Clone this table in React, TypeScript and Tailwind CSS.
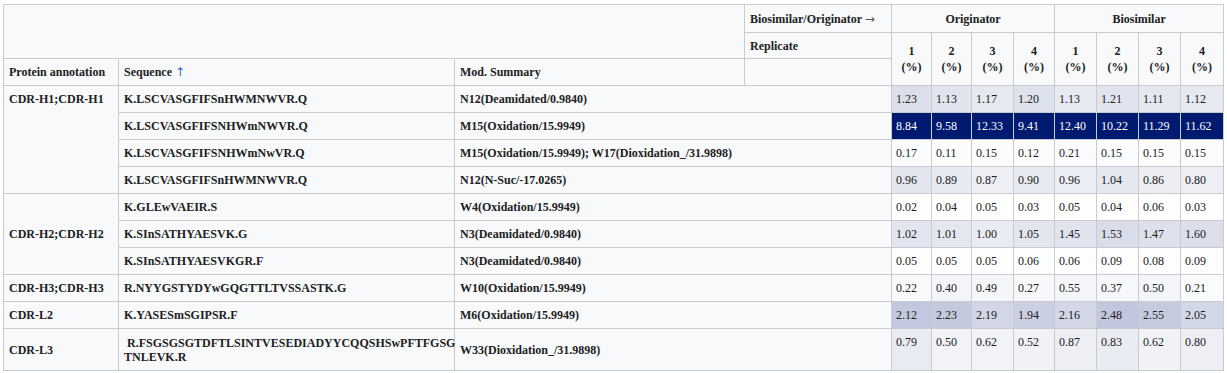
import React from "react";

type Row = {
  prot?: string;
  span?: number;
  top?: boolean;
  seq: React.ReactNode;
  mod: string;
  vals: number[];
  tall?: boolean;
};

const rows: Row[] = [
  { prot: "CDR-H1;CDR-H1", span: 4, top: true, seq: "K.LSCVASGFIFSnHWMNWVR.Q", mod: "N12(Deamidated/0.9840)", vals: [1.23, 1.13, 1.17, 1.2, 1.13, 1.21, 1.11, 1.12] },
  { seq: "K.LSCVASGFIFSNHWmNWVR.Q", mod: "M15(Oxidation/15.9949)", vals: [8.84, 9.58, 12.33, 9.41, 12.4, 10.22, 11.29, 11.62] },
  { seq: "K.LSCVASGFIFSNHWmNwVR.Q", mod: "M15(Oxidation/15.9949); W17(Dioxidation_/31.9898)", vals: [0.17, 0.11, 0.15, 0.12, 0.21, 0.15, 0.15, 0.15] },
  { seq: "K.LSCVASGFIFSnHWMNWVR.Q", mod: "N12(N-Suc/-17.0265)", vals: [0.96, 0.89, 0.87, 0.9, 0.96, 1.04, 0.86, 0.8] },
  { prot: "CDR-H2;CDR-H2", span: 3, seq: "K.GLEwVAEIR.S", mod: "W4(Oxidation/15.9949)", vals: [0.02, 0.04, 0.05, 0.03, 0.05, 0.04, 0.06, 0.03] },
  { seq: "K.SInSATHYAESVK.G", mod: "N3(Deamidated/0.9840)", vals: [1.02, 1.01, 1.0, 1.05, 1.45, 1.53, 1.47, 1.6] },
  { seq: "K.SInSATHYAESVKGR.F", mod: "N3(Deamidated/0.9840)", vals: [0.05, 0.05, 0.05, 0.06, 0.06, 0.09, 0.08, 0.09] },
  { prot: "CDR-H3;CDR-H3", span: 1, seq: "R.NYYGSTYDYwGQGTTLTVSSASTK.G", mod: "W10(Oxidation/15.9949)", vals: [0.22, 0.4, 0.49, 0.27, 0.55, 0.37, 0.5, 0.21] },
  { prot: "CDR-L2", span: 1, seq: "K.YASESmSGIPSR.F", mod: "M6(Oxidation/15.9949)", vals: [2.12, 2.23, 2.19, 1.94, 2.16, 2.48, 2.55, 2.05] },
  {
    prot: "CDR-L3",
    span: 1,
    tall: true,
    seq: (
      <>
        {"\u00A0R.FSGSGSGTDFTLSINTVESEDIADYYCQQSHSwPFTFGSG"}
        <br />
        TNLEVK.R
      </>
    ),
    mod: "W33(Dioxidation_/31.9898)",
    vals: [0.79, 0.5, 0.62, 0.52, 0.87, 0.83, 0.62, 0.8],
  },
];

const colMax = Array.from({ length: 8 }, (_, c) => Math.max(...rows.map((r) => r.vals[c])));
const NAVY = [0, 26, 112];

function bg(v: number, c: number) {
  const t = Math.min(1, v / colMax[c]);
  const m = (i: number) => Math.round(255 * (1 - t) + NAVY[i] * t);
  return `rgb(${m(0)},${m(1)},${m(2)})`;
}

const cell = "border border-[#c8ccd1] align-middle";
const th = `${cell} bg-[#f8f9fa] font-bold px-[5px] py-0 leading-[14px]`;

export default function App() {
  return (
    <div className="bg-white w-[1227px] h-[373px] pt-[4px] pl-[3px]" style={{ fontFamily: '"Liberation Serif", "Times New Roman", serif' }}>
      <table className="table-fixed border-collapse text-[12px] text-[#202122] w-[1221px]">
        <colgroup>
          <col className="w-[115px]" />
          <col className="w-[336px]" />
          <col className="w-[290px]" />
          <col className="w-[147px]" />
          <col className="w-[40px]" />
          <col className="w-[40px]" />
          <col className="w-[42px]" />
          <col className="w-[41px]" />
          <col className="w-[42px]" />
          <col className="w-[42px]" />
          <col className="w-[42px]" />
          <col className="w-[43px]" />
        </colgroup>
        <thead>
          <tr className="h-[28px]">
            <th colSpan={3} rowSpan={2} className={th}></th>
            <th className={`${th} text-left whitespace-nowrap`}>
              Biosimilar/Originator{" "}
              <span className="font-normal text-[#555] text-[12px]" style={{ fontFamily: '"DejaVu Sans", sans-serif' }}>
                →
              </span>
            </th>
            <th colSpan={4} className={`${th} text-center`}>Originator</th>
            <th colSpan={4} className={`${th} text-center`}>Biosimilar</th>
          </tr>
          <tr className="h-[26px]">
            <th className={`${th} text-left`}>Replicate</th>
            {[1, 2, 3, 4, 1, 2, 3, 4].map((n, i) => (
              <th key={i} rowSpan={2} className={`${cell} bg-[#f8f9fa] font-bold text-center px-0 leading-[16px]`}>
                {n}
                <br />
                (%)
              </th>
            ))}
          </tr>
          <tr className="h-[27px]">
            <th className={`${th} text-left`}>Protein annotation</th>
            <th className={`${th} text-left`}>
              Sequence{" "}
              <span className="font-normal text-[#3366cc] text-[12px]" style={{ fontFamily: '"DejaVu Sans", sans-serif' }}>
                ↑
              </span>
            </th>
            <th className={`${th} text-left`}>Mod. Summary</th>
            <th className={th}></th>
          </tr>
        </thead>
        <tbody>
          {rows.map((r, ri) => (
            <tr key={ri} className={r.tall ? "h-[42px]" : "h-[27px]"}>
              {r.prot && (
                <td
                  rowSpan={r.span}
                  className={`${cell} bg-[#f8f9fa] font-bold px-[5px] leading-[14px] whitespace-nowrap ${r.top ? "!align-top pt-[6px]" : ""}`}
                >
                  {r.prot}
                </td>
              )}
              <td className={`${cell} bg-[#f8f9fa] font-bold px-[5px] leading-[14px] whitespace-nowrap`}>{r.seq}</td>
              <td colSpan={2} className={`${cell} bg-[#f8f9fa] font-bold px-[5px] leading-[14px] whitespace-nowrap`}>
                {r.mod}
              </td>
              {r.vals.map((v, c) => {
                const dark = v / colMax[c] > 0.6;
                return (
                  <td
                    key={c}
                    className={`${cell} px-[4px] leading-[14px] whitespace-nowrap ${r.tall ? "!align-top pt-[6px]" : ""} ${dark ? "text-white" : ""}`}
                    style={{ backgroundColor: bg(v, c) }}
                  >
                    {v.toFixed(2)}
                  </td>
                );
              })}
            </tr>
          ))}
        </tbody>
      </table>
    </div>
  );
}
